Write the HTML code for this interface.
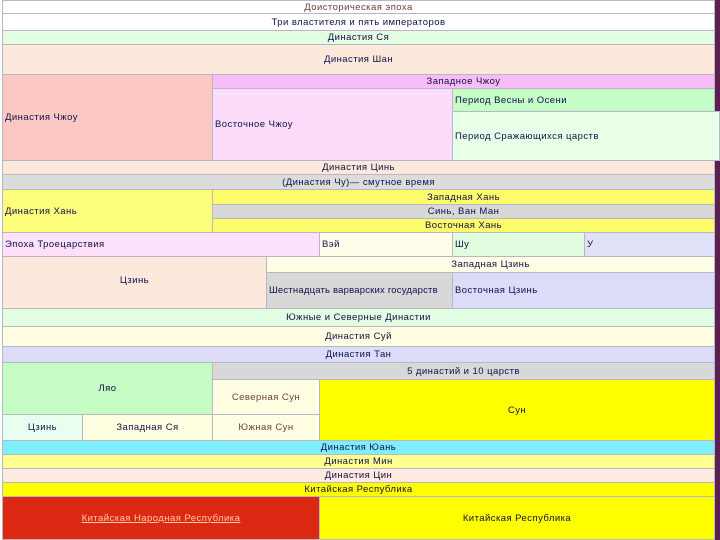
<!DOCTYPE html><html><head><meta charset="utf-8"><style>
body{margin:0;width:720px;height:540px;position:relative;overflow:hidden;background:#fff;font-family:"Liberation Sans","DejaVu Sans",sans-serif;font-size:9.5px;letter-spacing:0.45px;color:#10104a}
.c{position:absolute;box-sizing:border-box;border:1px solid #b8b8c4;display:flex;align-items:center;justify-content:center;white-space:nowrap;overflow:hidden}
.l{justify-content:flex-start;padding-left:2px}
#s{position:absolute;left:715px;top:0;width:5px;height:540px;background:#5c2050}
</style></head><body>
<div id="s"></div>
<div class="c" style="left:2px;top:0;width:713px;height:14px;background:#fff;color:#704040">Доисторическая эпоха</div>
<div class="c" style="left:2px;top:13px;width:713px;height:18px;background:#fff">Три властителя и пять императоров</div>
<div class="c" style="left:2px;top:30px;width:713px;height:15px;background:#e2fde2">Династия Ся</div>
<div class="c" style="left:2px;top:44px;width:713px;height:31px;background:#fde9dc">Династия Шан</div>
<div class="c l" style="left:2px;top:74px;width:211px;height:87px;background:#fcc8c4">Династия Чжоу</div>
<div class="c" style="left:212px;top:74px;width:503px;height:15px;background:#f8bdf8">Западное Чжоу</div>
<div class="c l" style="left:212px;top:88px;width:241px;height:73px;background:#fcdcfa">Восточное Чжоу</div>
<div class="c l" style="left:452px;top:88px;width:263px;height:24px;background:#c6fcc6">Период Весны и Осени</div>
<div class="c l" style="left:452px;top:111px;width:268px;height:50px;background:#e8ffe8">Период Сражающихся царств</div>
<div class="c" style="left:2px;top:160px;width:713px;height:15px;background:#fde9dc">Династия Цинь</div>
<div class="c" style="left:2px;top:174px;width:713px;height:16px;background:#dcdcdc">(Династия Чу)— смутное время</div>
<div class="c l" style="left:2px;top:189px;width:211px;height:44px;background:#fdfd7c">Династия Хань</div>
<div class="c" style="left:212px;top:189px;width:503px;height:16px;background:#fdfd6c">Западная Хань</div>
<div class="c" style="left:212px;top:204px;width:503px;height:15px;background:#d8d8d8">Синь, Ван Ман</div>
<div class="c" style="left:212px;top:218px;width:503px;height:15px;background:#fdfd6c">Восточная Хань</div>
<div class="c l" style="left:2px;top:232px;width:318px;height:25px;background:#fde0fa">Эпоха Троецарствия</div>
<div class="c l" style="left:319px;top:232px;width:134px;height:25px;background:#fffdea">Вэй</div>
<div class="c l" style="left:452px;top:232px;width:133px;height:25px;background:#e0fde0">Шу</div>
<div class="c l" style="left:584px;top:232px;width:131px;height:25px;background:#e0e0f8">У</div>
<div class="c" style="left:2px;top:256px;width:265px;height:53px;background:#fde9dc;padding-bottom:5px">Цзинь</div>
<div class="c" style="left:266px;top:256px;width:449px;height:17px;background:#fffde6">Западная Цзинь</div>
<div class="c l" style="left:266px;top:272px;width:187px;height:37px;background:#d8d8d8;letter-spacing:0.2px">Шестнадцать варварских государств</div>
<div class="c l" style="left:452px;top:272px;width:263px;height:37px;background:#dcdcf8">Восточная Цзинь</div>
<div class="c" style="left:2px;top:308px;width:713px;height:19px;background:#e2fde2">Южные и Северные Династии</div>
<div class="c" style="left:2px;top:326px;width:713px;height:21px;background:#fffde2">Династия Суй</div>
<div class="c" style="left:2px;top:346px;width:713px;height:17px;background:#dcdcf8">Династия Тан</div>
<div class="c" style="left:2px;top:362px;width:211px;height:53px;background:#c4fcc4">Ляо</div>
<div class="c" style="left:212px;top:362px;width:503px;height:18px;background:#d8d8d8">5 династий и 10 царств</div>
<div class="c" style="left:212px;top:379px;width:108px;height:36px;background:#fffde2;color:#704040">Северная Сун</div>
<div class="c" style="left:319px;top:379px;width:396px;height:62px;background:#ffff00">Сун</div>
<div class="c" style="left:2px;top:414px;width:81px;height:27px;background:#e8fff0">Цзинь</div>
<div class="c" style="left:82px;top:414px;width:131px;height:27px;background:#ffffe2">Западная Ся</div>
<div class="c" style="left:212px;top:414px;width:108px;height:27px;background:#fffde2;color:#704040">Южная Сун</div>
<div class="c" style="left:2px;top:440px;width:713px;height:15px;background:#7eeefc">Династия Юань</div>
<div class="c" style="left:2px;top:454px;width:713px;height:15px;background:#ffff90">Династия Мин</div>
<div class="c" style="left:2px;top:468px;width:713px;height:15px;background:#fde9e0">Династия Цин</div>
<div class="c" style="left:2px;top:482px;width:713px;height:15px;background:#ffff00">Китайская Республика</div>
<div class="c" style="left:2px;top:496px;width:318px;height:44px;background:#dd2814;color:#fcd0a0;text-decoration:underline">Китайская Народная Республика</div>
<div class="c" style="left:319px;top:496px;width:396px;height:44px;background:#ffff00">Китайская Республика</div>
</body></html>
